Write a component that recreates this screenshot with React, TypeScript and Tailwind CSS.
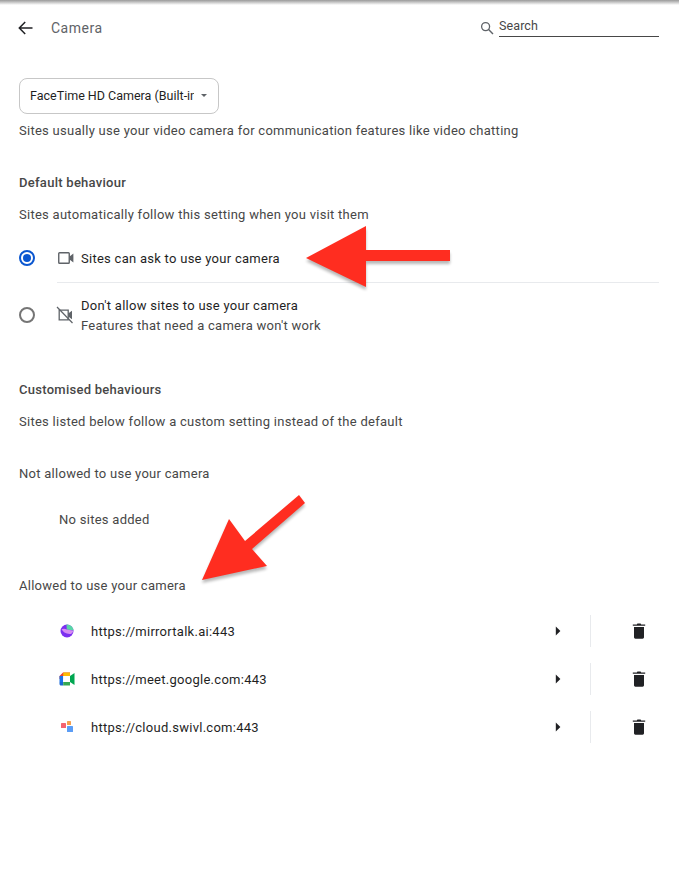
function VideoIcon() {
  return (
    <svg width="16" height="14" viewBox="0 0 16 14" fill="none" className="text-[#5f6368]">
      <rect x="0.75" y="1.75" width="10.5" height="10.5" rx="0.8" stroke="currentColor" strokeWidth="1.4" />
      <path d="M11.5 5.6 15.4 2.6V11.4L11.5 8.4Z" fill="currentColor" />
    </svg>
  );
}

function VideoOffIcon() {
  return (
    <svg width="18" height="18" viewBox="0 0 18 18" fill="none" className="text-[#5f6368]">
      <path d="M3.2 4.2H12.2V13.8H3.2Z" stroke="currentColor" strokeWidth="1.3" />
      <path d="M12.2 7.6 16 4.8V13.2L12.2 10.4Z" fill="currentColor" />
      <path d="M1 1 16.5 17" stroke="currentColor" strokeWidth="1.2" />
    </svg>
  );
}

function TrashIcon() {
  return (
    <svg width="14" height="16" viewBox="0 0 14 16" className="text-[#202124]">
      <path d="M4.8 1.4 5.4.4H8.6L9.2 1.4H13.2V2.8H.8V1.4Z" fill="currentColor" />
      <path d="M2 4H12V14.3C12 15.1 11.4 15.7 10.6 15.7H3.4C2.6 15.7 2 15.1 2 14.3Z" fill="currentColor" />
    </svg>
  );
}

function Caret() {
  return (
    <svg width="6" height="10" viewBox="0 0 6 10" className="text-[#202124]">
      <path d="M.8.6 5.4 5 .8 9.4Z" fill="currentColor" />
    </svg>
  );
}

function MirrorIcon() {
  return (
    <svg width="16" height="16" viewBox="0 0 16 16">
      <circle cx="8" cy="8" r="6.5" fill="#7c2ff0" />
      <path d="M7.5 1.5A6.5 6.5 0 0 1 14.5 7.6L7.8 6.6Z" fill="#58d6a6" />
      <path d="M2.6 6.2A5.6 5.6 0 0 1 7.8 6.6L14.5 7.8A5.5 5.5 0 0 1 12 11C8.5 11 4.5 10 2.6 6.2Z" fill="#d58cf2" />
    </svg>
  );
}

function MeetIcon() {
  return (
    <svg width="16" height="16" viewBox="0 0 16 16">
      <path d="M4 1.5H11V5H4.2V8H.5V5Z" fill="#ea4335" />
      <path d="M4.2 1.5H11V5H4.2Z" fill="#fbbc04" />
      <path d="M.5 5H4.2V11H.5Z" fill="#1a73e8" />
      <path d="M.5 11H4.2V14.5H2C1.1 14.5.5 13.9.5 13Z" fill="#1967d2" />
      <path d="M4.2 11H11V14.5H4.2Z" fill="#34a853" />
      <path d="M11 5V11L15.5 14V2Z" fill="#00a651" />
      <rect x="4.2" y="5" width="6" height="6" fill="#fff" />
    </svg>
  );
}

function SwivlIcon() {
  return (
    <svg width="16" height="16" viewBox="0 0 16 16">
      <rect x="2" y="4" width="5" height="5" rx="0.6" fill="#f4636f" />
      <rect x="8" y="2" width="4" height="4" rx="0.6" fill="#f6a04d" />
      <rect x="8" y="7" width="6" height="6" rx="0.6" fill="#5b9df5" />
    </svg>
  );
}

const sites = [
  { url: "https://mirrortalk.ai:443", icon: <MirrorIcon /> },
  { url: "https://meet.google.com:443", icon: <MeetIcon /> },
  { url: "https://cloud.swivl.com:443", icon: <SwivlIcon /> },
];

export default function App() {
  return (
    <div className="relative w-[679px] h-[886px] overflow-hidden bg-white text-[13px] leading-[20px] tracking-[0.27px] text-[#474747] font-['Roboto',sans-serif]">
      <div className="h-[5px] bg-gradient-to-b from-[#9a9a9a] to-white" />

      <div className="flex items-center h-[46px] pl-[18px] pr-[20px]">
        <svg width="15" height="14" viewBox="0 0 15 14" fill="none" className="text-[#202124]">
          <path d="M14.5 7H1.5M7.2 1 1.3 7l5.9 6" stroke="currentColor" strokeWidth="1.5" />
        </svg>
        <span className="ml-[18px] text-[14px] tracking-[0.5px] text-[#5f6368]">Camera</span>
        <div className="ml-auto flex items-center">
          <svg width="14" height="14" viewBox="0 0 14 14" fill="none" className="text-[#5f6368]">
            <circle cx="5.6" cy="5.6" r="4" stroke="currentColor" strokeWidth="1.3" />
            <path d="M8.6 8.6 13 13" stroke="currentColor" strokeWidth="1.4" />
          </svg>
          <div className="ml-[5px] w-[160px] h-[20px] border-b border-[#474747] text-[12.5px] leading-[18px] tracking-[0.1px] text-[#474747] -mt-[3px]">
            Search
          </div>
        </div>
      </div>

      <div className="pl-[19px] pr-[20px] pt-[27px]">
        <div className="flex items-center w-[200px] h-[36px] pl-[10px] rounded-[8px] border border-[#c7c7c7] text-[12.5px] tracking-normal text-[#1f1f1f]">
          <span className="w-[164px] overflow-hidden whitespace-nowrap">FaceTime HD Camera (Built-in)</span>
          <svg width="6" height="3" viewBox="0 0 6 3" className="ml-[7px] -mt-[2px] text-[#5f6368]">
            <path d="M0 0H6L3 3Z" fill="currentColor" />
          </svg>
        </div>
        <p className="mt-[7px]">Sites usually use your video camera for communication features like video chatting</p>

        <h2 className="mt-[32px] font-medium">Default behaviour</h2>
        <p className="mt-[12px]">Sites automatically follow this setting when you visit them</p>

        <div className="mt-[9px]">
          <div className="flex items-center h-[48px]">
            <span className="flex items-center justify-center w-[16px] h-[16px] rounded-full border-2 border-[#0b57d0]">
              <span className="w-[8px] h-[8px] rounded-full bg-[#0b57d0]" />
            </span>
            <span className="ml-[23px] w-[23px]"><VideoIcon /></span>
            <span className="mt-[2px] text-[#1f1f1f]">Sites can ask to use your camera</span>
          </div>
          <div className="ml-[38px] h-px bg-[#e8eaed]" />
          <div className="flex items-center h-[64px]">
            <span className="w-[16px] h-[16px] rounded-full border-2 border-[#757575]" />
            <span className="ml-[21px] w-[25px]"><VideoOffIcon /></span>
            <div className="mt-[2px]">
              <div className="text-[#1f1f1f]">Don't allow sites to use your camera</div>
              <div>Features that need a camera won't work</div>
            </div>
          </div>
        </div>

        <h2 className="mt-[33px] font-medium">Customised behaviours</h2>
        <p className="mt-[12px]">Sites listed below follow a custom setting instead of the default</p>

        <p className="mt-[32px]">Not allowed to use your camera</p>
        <p className="mt-[26px] ml-[40px]">No sites added</p>

        <p className="mt-[46px]">Allowed to use your camera</p>

        <div className="mt-[11px]">
          {sites.map((site) => (
            <div key={site.url} className="flex items-center h-[48px] pl-[40px]">
              <span className="flex w-[32px]">{site.icon}</span>
              <span className="mt-[2px] text-[#1f1f1f]">{site.url}</span>
              <span className="ml-auto flex items-center">
                <Caret />
                <span className="ml-[29px] w-px h-[32px] bg-[#e8eaed]" />
                <span className="ml-[41px] mr-[13px] flex"><TrashIcon /></span>
              </span>
            </div>
          ))}
        </div>
      </div>

      {/* annotation arrows on top of the screenshot */}
      <svg width="679" height="886" viewBox="0 0 679 886" className="absolute left-0 top-0 pointer-events-none">
        <g fill="#000" opacity="0.28" transform="translate(0 3)" className="blur-[1.5px]">
          <path d="M306 258 366 226V250H450V261H366V287Z" />
          <path d="M202 580 229 519 245 541 299 495 305 503 252 549 267 566Z" />
        </g>
        <path d="M306 258 366 226V250H450V261H366V287Z" fill="#ff2d20" />
        <path d="M202 580 229 519 245 541 299 495 305 503 252 549 267 566Z" fill="#ff2d20" />
      </svg>
    </div>
  );
}
